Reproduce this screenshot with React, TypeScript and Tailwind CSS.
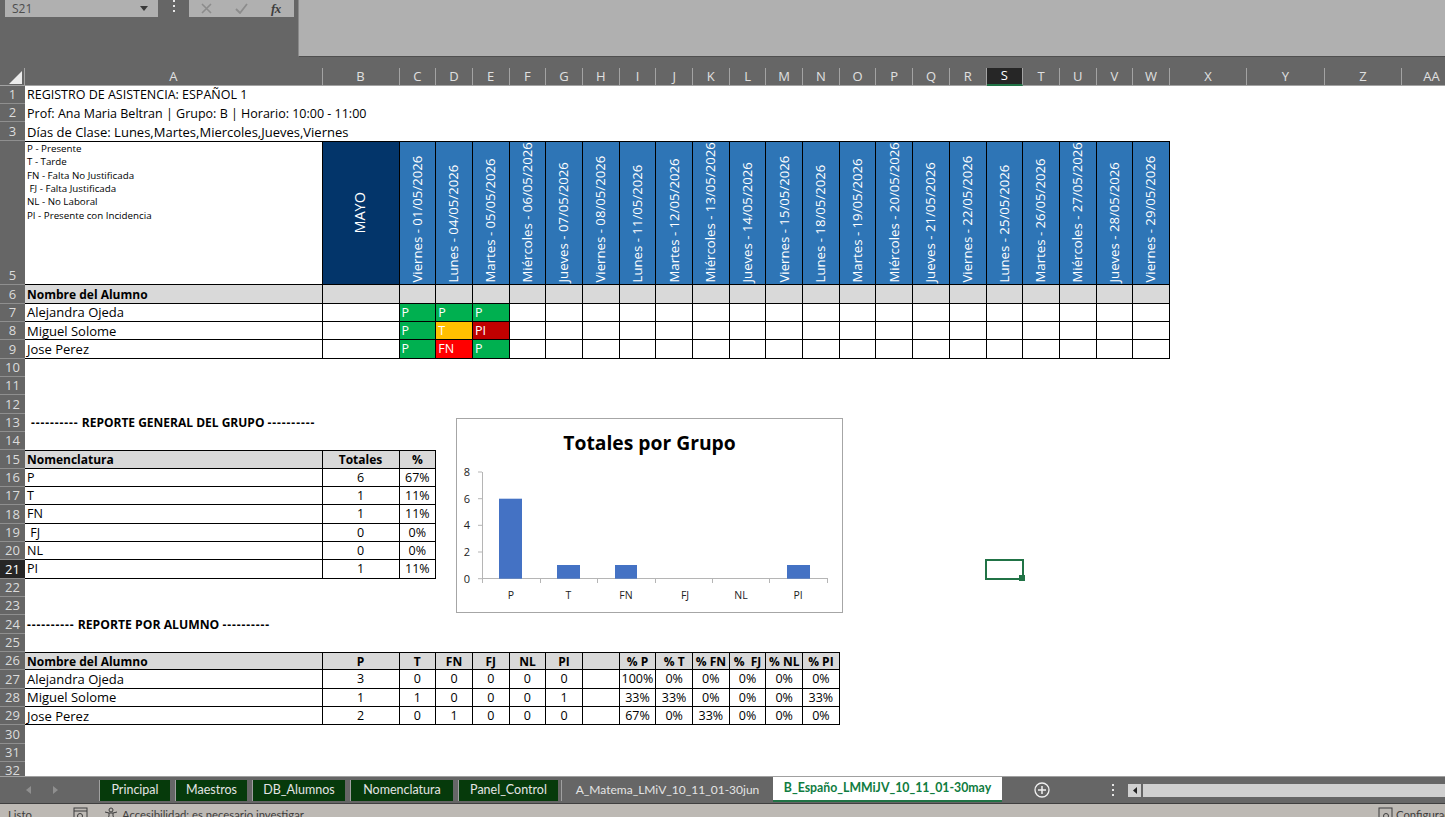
import React from "react";

const letters = "C D E F G H I J K L M N O P Q R S T U V W".split(" ");
const dates = [
  "Viernes - 01/05/2026","Lunes - 04/05/2026","Martes - 05/05/2026","Miércoles - 06/05/2026","Jueves - 07/05/2026","Viernes - 08/05/2026","Lunes - 11/05/2026",
  "Martes - 12/05/2026","Miércoles - 13/05/2026","Jueves - 14/05/2026","Viernes - 15/05/2026","Lunes - 18/05/2026","Martes - 19/05/2026","Miércoles - 20/05/2026",
  "Jueves - 21/05/2026","Viernes - 22/05/2026","Lunes - 25/05/2026","Martes - 26/05/2026","Miércoles - 27/05/2026","Jueves - 28/05/2026","Viernes - 29/05/2026",
];
const legend = ["P - Presente","T - Tarde","FN - Falta No Justificada"," FJ - Falta Justificada","NL - No Laboral","PI - Presente con Incidencia"];
const attendance: string[][] = [
  ["Alejandra Ojeda","P","P","P"],
  ["Miguel Solome","P","T","PI"],
  ["Jose Perez","P","FN","P"],
];
const marks: Record<string,string> = { P:"bg-[#00b050]", T:"bg-[#ffc000]", FN:"bg-[#ff0000]", PI:"bg-[#c00000]" };
const totals = [["P","6","67%"],["T","1","11%"],["FN","1","11%"],[" FJ","0","0%"],["NL","0","0%"],["PI","1","11%"]];
const perStudent = [
  ["Alejandra Ojeda","3","0","0","0","0","0","","100%","0%","0%","0%","0%","0%"],
  ["Miguel Solome","1","1","0","0","0","1","","33%","33%","0%","0%","0%","33%"],
  ["Jose Perez","2","0","1","0","0","0","","67%","0%","33%","0%","0%","0%"],
];
const perHead = ["P","T","FN","FJ","NL","PI","","% P","% T","% FN","%  FJ","% NL","% PI"];

const rowCls = "grid grid-cols-subgrid col-span-full";
const box = "border-r border-b border-black flex items-center pt-[1px]";

function RowHead({ n, active, end }: { n: string; active?: boolean; end?: boolean }) {
  return (
    <div className={`flex justify-center border-b border-b-[#8f8f8f] text-[13px] ${end ? "items-end pb-[2px]" : "items-center"} ${active ? "bg-[#262626] text-white" : "bg-[#666666] text-[#dcdcdc]"}`}>
      {n}
    </div>
  );
}

function ColHead({ l, active }: { l: string; active?: boolean }) {
  return (
    <div className={`flex items-center justify-center border-r border-r-[#a3a3a3] text-[13px] ${active ? "bg-[#262626] text-white border-b-2 border-b-[#217346]" : "bg-[#666666] border-b border-b-[#a3a3a3] text-[#e0e0e0]"}`}>
      {l}
    </div>
  );
}

function Row({ n, active, children }: { n: number | string; active?: boolean; children?: React.ReactNode }) {
  return (
    <div className={rowCls}>
      <RowHead n={String(n)} active={active} />
      {children}
    </div>
  );
}

function Chart() {
  const ticksY = [["8", 472], ["6", 498.7], ["4", 525.3], ["2", 552], ["0", 578.7]] as const;
  const ticksX = [482, 540, 597, 655, 712, 769, 827];
  const bars = [[499, 23, 498.7], [557, 23, 565], [615, 22, 565], [787, 23, 565]];
  const labels = [["P", 511], ["T", 568.5], ["FN", 626], ["FJ", 685], ["NL", 741], ["PI", 798]] as const;
  return (
    <div className="absolute left-[456px] top-[350.5px] w-[387px] h-[195px] bg-white border border-[#a6a6a6]">
      <div className="mt-[10px] text-center text-[19.3px] leading-[28px] font-bold text-black">Totales por Grupo</div>
      <svg className="absolute left-0 top-0" width="385" height="193" viewBox="457 419 385 193">
        <line x1="482.5" y1="472" x2="482.5" y2="579" stroke="#b5b5b5" />
        <line x1="482" y1="578.5" x2="828" y2="578.5" stroke="#b5b5b5" />
        {ticksY.map(([t, y]) => (
          <g key={t}>
            <line x1="478" y1={y} x2="482" y2={y} stroke="#b5b5b5" />
            <text x="467" y={y + 4} fontSize="11" textAnchor="middle" fill="#222">{t}</text>
          </g>
        ))}
        {ticksX.map((x) => <line key={x} x1={x + 0.5} y1="579" x2={x + 0.5} y2="583" stroke="#b5b5b5" />)}
        {bars.map(([x, w, y]) => <rect key={x} x={x} y={y} width={w} height={578.7 - y} fill="#4472c4" />)}
        {labels.map(([t, x]) => <text key={t} x={x} y="599" fontSize="10.5" textAnchor="middle" fill="#222">{t}</text>)}
      </svg>
    </div>
  );
}

const tabs: [string, string][] = [
  ["Principal", "w-[71px]"], ["Maestros", "w-[72px]"], ["DB_Alumnos", "w-[93px]"], ["Nomenclatura", "w-[103px]"], ["Panel_Control", "w-[100px]"],
];

export default function App() {
  return (
    <div className="w-[1445px] h-[817px] overflow-hidden flex flex-col bg-[#666666] text-black [font-family:'Open_Sans','Liberation_Sans',sans-serif]">
      {/* Formula bar */}
      <div className="h-[67.5px] shrink-0 flex items-start">
        <div className="ml-[5px] w-[153px] h-[17px] bg-[#b0b0b0] flex items-center justify-between pl-[7px] pr-[10px] text-[12px] text-[#4d4d4d]">
          <span>S21</span>
          <svg width="8" height="5" viewBox="0 0 8 5"><path d="M0 0h8L4 5z" fill="#3a3a3a" /></svg>
        </div>
        <div className="w-[31px] h-[12px] flex flex-col items-center justify-between">
          <span className="w-[2px] h-[2px] bg-[#e6e6e6]" />
          <span className="w-[2px] h-[2px] bg-[#e6e6e6]" />
          <span className="w-[2px] h-[2px] bg-[#e6e6e6]" />
        </div>
        <div className="w-[105px] h-[17px] bg-[#b0b0b0] flex items-center pl-[12px] gap-[23px]">
          <svg width="11" height="11" viewBox="0 0 11 11"><path d="M1 1l9 9M10 1l-9 9" stroke="#8c8c8c" strokeWidth="1.6" fill="none" /></svg>
          <svg width="13" height="11" viewBox="0 0 13 11"><path d="M1 6l4 4 7-9" stroke="#8c8c8c" strokeWidth="1.8" fill="none" /></svg>
          <span className="[font-family:'Liberation_Serif',serif] italic font-bold text-[13px] text-[#3d3d3d] tracking-[-0.5px]">fx</span>
        </div>
        <div className="ml-[4px] flex-1 h-[56.5px] bg-[#b0b0b0] border-b border-b-[#4f4f4f] border-l border-l-[#8a8a8a]" />
      </div>

      {/* Sheet */}
      <div className="relative h-[708.5px] shrink-0 overflow-hidden bg-white">
        <div className="grid grid-cols-[25px_297.5px_77px_repeat(21,36.7px)_77px_78px_77px_60px] grid-rows-[repeat(4,18.33px)_144.67px_repeat(27,18.33px)] text-[12.5px] leading-none">
          <div className={rowCls}>
            <div className="relative bg-[#666666] border-b border-b-[#a3a3a3] border-r border-r-[#a3a3a3]">
              <svg className="absolute left-[9px] top-[3px]" width="13" height="13" viewBox="0 0 13 13"><path d="M13 0v13H0z" fill="#ececec" /></svg>
            </div>
            <ColHead l="A" />
            <ColHead l="B" />
            {letters.map((l) => <ColHead key={l} l={l} active={l === "S"} />)}
            <ColHead l="X" />
            <ColHead l="Y" />
            <ColHead l="Z" />
            <ColHead l="AA" />
          </div>

          <Row n={1}><div className="col-[2/-1] flex items-center pl-[2px] pt-[1px]">REGISTRO DE ASISTENCIA: ESPAÑOL 1</div></Row>
          <Row n={2}><div className="col-[2/-1] flex items-center pl-[2px] pt-[1px]">Prof: Ana Maria Beltran | Grupo: B | Horario: 10:00 - 11:00</div></Row>
          <Row n={3}><div className="col-[2/-1] flex items-center pl-[2px] pt-[1px] text-[13px]">Días de Clase: Lunes,Martes,Miercoles,Jueves,Viernes</div></Row>

          <div className={rowCls}>
            <RowHead n="5" end />
            <div className="border-t border-r border-b border-black pl-[2px] text-[9.75px] font-medium leading-[13.4px] whitespace-pre">
              {legend.map((t) => <div key={t}>{t}</div>)}
            </div>
            <div className="border-t border-r border-b border-black bg-[#03356a] flex items-center justify-center text-white">
              <span className="[writing-mode:vertical-rl] rotate-180 text-[14.5px]">MAYO</span>
            </div>
            {dates.map((d) => (
              <div key={d} className="border-t border-r border-b border-black bg-[#2e75b6] flex items-center justify-center text-white">
                <span className="[writing-mode:vertical-rl] rotate-180 h-[139px] -translate-y-[0.5px] text-[13.2px] whitespace-nowrap text-left">{d}</span>
              </div>
            ))}
          </div>

          <Row n={6}>
            <div className={`${box} bg-[#d9d9d9] pl-[2px] font-bold text-[12px]`}>Nombre del Alumno</div>
            <div className={`${box} bg-[#d9d9d9]`} />
            {letters.map((l) => <div key={l} className={`${box} bg-[#d9d9d9]`} />)}
          </Row>

          {attendance.map((row, i) => (
            <Row key={row[0]} n={7 + i}>
              <div className={`${box} pl-[2px] text-[13px]`}>{row[0]}</div>
              <div className={box} />
              {letters.map((l, j) => {
                const m = row[j + 1];
                return <div key={l} className={`${box} pl-[2px] text-white ${m ? marks[m] : ""}`}>{m}</div>;
              })}
            </Row>
          ))}

          <Row n={10} />
          <Row n={11} />
          <Row n={12} />
          <Row n={13}>
            <div className="col-[2/-1] flex items-center pl-[6px] pt-[1px] font-bold text-[12px] whitespace-pre">
              <span><span className="tracking-[0.9px]">----------</span> REPORTE GENERAL DEL GRUPO <span className="tracking-[0.9px]">----------</span></span>
            </div>
          </Row>
          <Row n={14} />
          <Row n={15}>
            <div className={`${box} border-t bg-[#d9d9d9] pl-[2px] font-bold text-[12px]`}>Nomenclatura</div>
            <div className={`${box} border-t bg-[#d9d9d9] justify-center font-bold text-[12px]`}>Totales</div>
            <div className={`${box} border-t bg-[#d9d9d9] justify-center font-bold text-[12px]`}>%</div>
          </Row>
          {totals.map((r, i) => (
            <Row key={r[0]} n={16 + i} active={i === 5}>
              <div className={`${box} pl-[2px] whitespace-pre`}>{r[0]}</div>
              <div className={`${box} justify-center`}>{r[1]}</div>
              <div className={`${box} justify-center`}>{r[2]}</div>
            </Row>
          ))}
          <Row n={22} />
          <Row n={23} />
          <Row n={24}>
            <div className="col-[2/-1] flex items-center pl-[2px] pt-[1px] font-bold text-[12px] whitespace-pre">
              <span><span className="tracking-[0.9px]">----------</span> <span className="text-[12.2px]">REPORTE POR ALUMNO</span> <span className="tracking-[0.9px]">----------</span></span>
            </div>
          </Row>
          <Row n={25} />
          <Row n={26}>
            <div className={`${box} border-t bg-[#d9d9d9] pl-[2px] font-bold text-[12px]`}>Nombre del Alumno</div>
            {perHead.map((h, i) => (
              <div key={i} className={`${box} border-t bg-[#d9d9d9] justify-center font-bold text-[12px] whitespace-pre`}>{h}</div>
            ))}
          </Row>
          {perStudent.map((r, i) => (
            <Row key={r[0]} n={27 + i}>
              {r.map((c, j) => (
                <div key={j} className={`${box} ${j === 0 ? "pl-[2px] text-[13px]" : "justify-center"}`}>{c}</div>
              ))}
            </Row>
          ))}
          <Row n={30} />
          <Row n={31} />
          <Row n={32} />
        </div>

        <Chart />

        {/* Selected cell S21 */}
        <div className="absolute left-[985px] top-[491.5px] w-[39px] h-[21px] border-2 border-[#217346]">
          <span className="absolute right-[-3px] bottom-[-3px] w-[6px] h-[6px] bg-[#217346]" />
        </div>
      </div>

      {/* Sheet tabs */}
      <div className="h-[28px] shrink-0 flex items-center bg-[#666666] border-t border-t-[#a0a0a0] border-b border-b-[#3f3f3f]">
        <div className="w-[99px] h-full flex items-center pl-[26px] gap-[22px] shrink-0">
          <svg width="5" height="8" viewBox="0 0 5 8"><path d="M5 0v8L0 4z" fill="#8f8f8f" /></svg>
          <svg width="5" height="8" viewBox="0 0 5 8"><path d="M0 0v8l5-4z" fill="#8f8f8f" /></svg>
        </div>
        <div className="flex items-center gap-[5px] shrink-0 [font-family:Lato,sans-serif]">
          {tabs.map(([t, w]) => (
            <div key={t} className={`${w} h-[21px] bg-[#063a0b] flex items-center justify-center text-[12.5px] text-[#e4e4e4] border-l border-l-[#a0a0a0]`}>{t}</div>
          ))}
        </div>
        <div className="ml-[3px] w-[212px] h-[21px] flex items-center justify-center text-[12px] text-[#e4e4e4] border-l border-l-[#a0a0a0] [font-family:Lato,sans-serif]">A_Matema_LMiV_10_11_01-30jun</div>
        <div className="w-[229px] self-start h-[25px] bg-white border-b-2 border-b-[#217346] flex items-center justify-center text-[12.3px] font-bold text-[#107c41] [font-family:Lato,sans-serif]">B_Españo_LMMiJV_10_11_01-30may</div>
        <svg className="ml-[32px] shrink-0" width="16" height="16" viewBox="0 0 16 16">
          <circle cx="8" cy="8" r="7" stroke="#f0f0f0" strokeWidth="1.3" fill="none" />
          <path d="M8 4v8M4 8h8" stroke="#f0f0f0" strokeWidth="1.5" />
        </svg>
        <div className="ml-[62px] w-[2px] h-[12px] flex flex-col justify-between shrink-0">
          <span className="w-[2px] h-[2px] bg-[#e6e6e6]" />
          <span className="w-[2px] h-[2px] bg-[#e6e6e6]" />
          <span className="w-[2px] h-[2px] bg-[#e6e6e6]" />
        </div>
        <div className="ml-[14px] w-[13px] h-[13px] bg-[#d0d0d0] flex items-center justify-center shrink-0">
          <svg width="4" height="7" viewBox="0 0 4 7"><path d="M4 0v7L0 3.5z" fill="#222" /></svg>
        </div>
        <div className="ml-[2px] flex-1 h-[13px] bg-[#d0d0d0]" />
      </div>

      {/* Status bar */}
      <div className="flex-1 overflow-hidden bg-[#bdb9b4] flex items-start text-[11.3px] text-[#3d3d3d] pt-[3px] [font-family:Lato,sans-serif]">
        <span className="ml-[8px] w-[65px]">Listo</span>
        <svg className="shrink-0" width="15" height="14" viewBox="0 0 15 14"><rect x="1" y="1" width="13" height="12" fill="none" stroke="#3d3d3d" /><path d="M1 4h13" stroke="#3d3d3d" /><circle cx="7" cy="9" r="2.5" fill="none" stroke="#3d3d3d" /></svg>
        <svg className="ml-[16px] shrink-0" width="14" height="14" viewBox="0 0 14 14"><circle cx="7" cy="3" r="2" fill="none" stroke="#3d3d3d" /><path d="M1 5l4 1h4l4-1M5 6v3l-2 4M9 6v3l2 4" fill="none" stroke="#3d3d3d" /></svg>
        <span className="ml-[4px]">Accesibilidad: es necesario investigar</span>
        <svg className="ml-auto shrink-0" width="15" height="14" viewBox="0 0 15 14"><rect x="1" y="1" width="13" height="11" fill="none" stroke="#3d3d3d" /><circle cx="8" cy="9" r="2.5" fill="none" stroke="#3d3d3d" /></svg>
        <span className="ml-[3px] w-[49px] whitespace-nowrap overflow-hidden">Configuración</span>
      </div>
    </div>
  );
}
